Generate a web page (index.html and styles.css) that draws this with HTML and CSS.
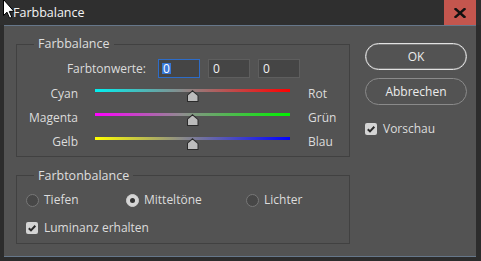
FILE: index.html
```html
<!DOCTYPE html>
<html lang="de">
<head>
<meta charset="utf-8">
<title>Farbbalance</title>
<link rel="stylesheet" href="styles.css">
</head>
<body>
<div class="window">
  <div class="titlebar">
    <span class="title">Farbbalance</span>
    <button class="close" aria-label="Schließen">
      <svg width="12" height="10" viewBox="0 0 12 10"><path d="M1.5 1 L10.5 9 M10.5 1 L1.5 9" stroke="#111" stroke-width="2.4" stroke-linecap="square"/></svg>
    </button>
  </div>
  <div class="dialog">
    <div class="main">
      <section class="group group-balance">
        <span class="legend">Farbbalance</span>
        <div class="values">
          <span class="values-label">Farbtonwerte:</span>
          <span class="field active"><span class="sel">0</span></span>
          <span class="field">0</span>
          <span class="field">0</span>
        </div>
        <div class="sliders">
          <span class="lab-l">Cyan</span>
          <div class="track cyan-red"><span class="thumb"></span></div>
          <span class="lab-r">Rot</span>
          <span class="lab-l">Magenta</span>
          <div class="track magenta-green"><span class="thumb"></span></div>
          <span class="lab-r">Grün</span>
          <span class="lab-l">Gelb</span>
          <div class="track yellow-blue"><span class="thumb"></span></div>
          <span class="lab-r">Blau</span>
        </div>
      </section>
      <section class="group group-tone">
        <span class="legend">Farbtonbalance</span>
        <div class="radios">
          <label class="radio"><span class="dot"></span>Tiefen</label>
          <label class="radio"><span class="dot on"></span>Mitteltöne</label>
          <label class="radio"><span class="dot"></span>Lichter</label>
        </div>
        <label class="check lum"><span class="box"><svg width="12" height="12" viewBox="0 0 12 12"><path d="M2.8 6.2 L5 8.4 L9.3 3.8" fill="none" stroke="#2a2a2a" stroke-width="2"/></svg></span>Luminanz erhalten</label>
      </section>
    </div>
    <div class="side">
      <button class="btn primary">OK</button>
      <button class="btn">Abbrechen</button>
      <label class="check preview"><span class="box"><svg width="12" height="12" viewBox="0 0 12 12"><path d="M2.8 6.2 L5 8.4 L9.3 3.8" fill="none" stroke="#2a2a2a" stroke-width="2"/></svg></span>Vorschau</label>
    </div>
  </div>
</div>
<svg class="cursor" width="16" height="22" viewBox="0 0 16 22"><path d="M3.5 -0.5 L3.5 15.5 L7 12.2 L9.6 18.2 L11.8 17.2 L9.3 11.4 L14 11.4 Z" fill="#fff" stroke="#000" stroke-width="1"/></svg>
</body>
</html>
```
FILE: styles.css
```css
html, body {
  margin: 0;
  padding: 0;
}
body {
  width: 481px;
  height: 261px;
  overflow: hidden;
  background: #2c2c2c;
  font-family: "Open Sans", "Noto Sans", sans-serif;
  font-size: 12px;
  color: #dcdcdc;
  position: relative;
}
.window {
  display: flex;
  flex-direction: column;
}
.titlebar {
  height: 25px;
  display: flex;
  align-items: center;
  background: #2f2f2f;
}
.title {
  padding-left: 13px;
  color: #f4f4f4;
  font-size: 12.5px;
  line-height: 25px;
}
.close {
  margin-left: auto;
  margin-right: 5px;
  width: 32px;
  height: 25px;
  border: 0;
  padding: 0;
  background: #c4564e;
  display: flex;
  align-items: center;
  justify-content: center;
}
.dialog {
  box-sizing: border-box;
  height: 232px;
  margin: 0 5px 0 4px;
  background: #535353;
  border-top: 1px solid #66778a;
  border-bottom: 1px solid #66778a;
  display: flex;
  padding: 18px 0 0 12px;
  gap: 15px;
}
.main {
  display: flex;
  flex-direction: column;
  gap: 18px;
}
.group {
  position: relative;
  box-sizing: border-box;
  width: 334px;
  border: 1px solid #414141;
}
.group-balance { height: 113px; }
.group-tone { height: 69px; }
.legend {
  position: absolute;
  top: -9px;
  left: 17px;
  padding: 0 4px;
  background: #535353;
  line-height: 16px;
  font-size: 12.5px;
  color: #dedede;
}
.group-tone .legend { top: -8px; }
.values {
  display: flex;
  align-items: center;
  margin-top: 14px;
  height: 19px;
}
.values-label {
  width: 129px;
  text-align: right;
  margin-right: 12px;
}
.field {
  box-sizing: border-box;
  width: 42px;
  height: 19px;
  margin-right: 8px;
  background: #454545;
  border: 1px solid #5e5e5e;
  color: #f2f2f2;
  padding-left: 4px;
  line-height: 17px;
}
.field.active {
  border-color: #2d6cc8;
}
.sel {
  display: inline-block;
  background: #3877d6;
  color: #fff;
  line-height: 11px;
  padding: 0 1px;
  margin-left: -1px;
  margin-top: 3px;
  vertical-align: top;
}
.sliders {
  display: grid;
  grid-template-columns: 61px 195px auto;
  column-gap: 17px;
  row-gap: 8px;
  margin-top: 8px;
}
.lab-l {
  text-align: right;
  line-height: 16px;
}
.lab-r {
  line-height: 16px;
  padding-left: 1px;
}
.track {
  position: relative;
  height: 3px;
  margin-top: 3px;
}
.cyan-red { background: linear-gradient(90deg, #00f0f0 0%, #8a8a8a 45%, #ff0000 100%); }
.magenta-green { background: linear-gradient(90deg, #ff00ff 0%, #8e8e8e 45%, #00f000 100%); }
.yellow-blue { background: linear-gradient(90deg, #ffff00 0%, #8a8a8a 45%, #0000ff 100%); }
.thumb {
  position: absolute;
  top: 1px;
  left: 50%;
  width: 12px;
  height: 12px;
  margin-left: -6px;
  background: #2a2a2a;
  clip-path: polygon(50% 0, 100% 45%, 100% 100%, 0 100%, 0 45%);
}
.thumb::after {
  content: "";
  position: absolute;
  left: 1px;
  top: 1.5px;
  width: 10px;
  height: 9.5px;
  background: #bcbcbc;
  clip-path: polygon(50% 0, 100% 45%, 100% 100%, 0 100%, 0 45%);
}
.radios {
  display: grid;
  grid-template-columns: 100px 120px auto;
  margin: 16px 0 0 9px;
  line-height: 16px;
}
.radio {
  display: flex;
  align-items: center;
  gap: 5px;
}
.dot {
  box-sizing: border-box;
  width: 13px;
  height: 13px;
  border-radius: 50%;
  background: #474747;
  border: 1px solid #777;
  position: relative;
}
.dot.on {
  background: #d6d6d6;
  border-color: #cfcfcf;
}
.dot.on::after {
  content: "";
  position: absolute;
  left: 3px;
  top: 3px;
  width: 5px;
  height: 5px;
  border-radius: 50%;
  background: #333;
}
.check {
  display: flex;
  align-items: center;
  gap: 6px;
  line-height: 16px;
}
.box {
  width: 12px;
  height: 12px;
  border-radius: 2px;
  background: #d4d4d4;
  display: flex;
}
.lum {
  margin: 12px 0 0 9px;
}
.side {
  display: flex;
  flex-direction: column;
  margin-top: -1px;
  width: 102px;
}
.btn {
  box-sizing: border-box;
  width: 102px;
  height: 27px;
  border-radius: 14px;
  background: transparent;
  border: 1px solid #8a8a8a;
  color: #ececec;
  font-family: inherit;
  font-size: 12px;
  padding: 0;
  margin-bottom: 8px;
}
.btn.primary {
  border: 1px solid #e2e2e2;
  box-shadow: inset 0 0 0 0.6px rgba(210, 210, 210, 0.6);
}
.preview {
  margin-top: 8px;
}
.cursor {
  position: absolute;
  left: 0;
  top: 0;
}
```
